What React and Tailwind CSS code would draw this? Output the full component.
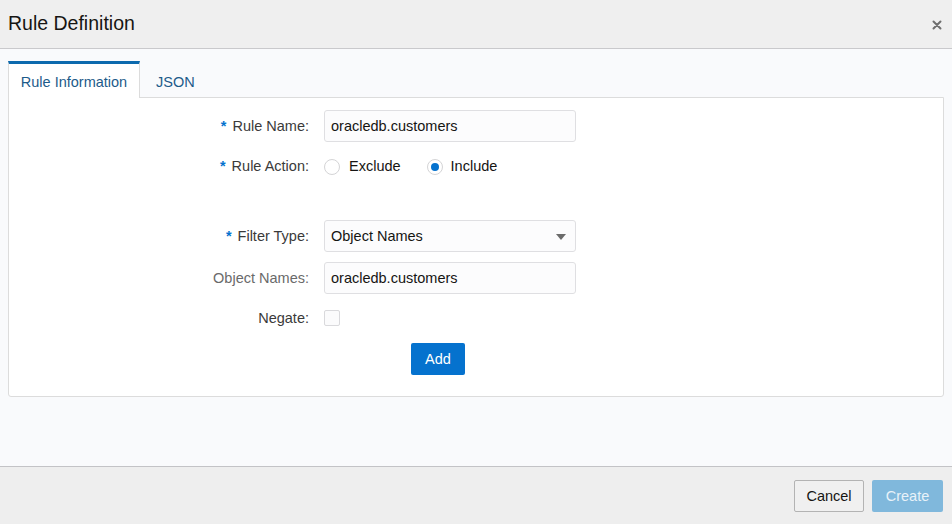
export default function App() {
  const font = { fontFamily: '"Liberation Sans", Arial, sans-serif' };

  return (
    <div className="w-[952px] h-[524px] flex flex-col bg-[#f9fafc] overflow-hidden" style={font}>
      {/* Header */}
      <div className="h-[49px] shrink-0 flex items-center justify-between pl-2 pr-[10px] bg-[#efefef] border-b border-[#c9c9cc]">
        <div className="text-[19.5px] text-[#161513] leading-none">Rule Definition</div>
        <svg width="10" height="10" viewBox="0 0 10 10" className="mt-[1px]">
          <path d="M1.5 1.5 L8.5 8.5 M8.5 1.5 L1.5 8.5" stroke="#6f6f6f" strokeWidth="2" strokeLinecap="round" />
        </svg>
      </div>

      {/* Body */}
      <div className="flex-1 px-2 pt-3">
        {/* Tabs */}
        <div className="flex h-[37px]">
          <div className="w-[132px] h-[37px] bg-white border-t-[3px] border-[#0d6aae] border-x border-x-[#dcdcdc] flex items-center justify-center pt-[3px] text-[14.5px] text-[#1d5b8a] relative z-10">
            Rule Information
          </div>
          <div className="px-4 flex items-center text-[14.5px] text-[#1d5b8a] pt-[6px]">JSON</div>
        </div>

        {/* Panel */}
        <div className="-mt-px bg-white border border-[#dcdcdc] rounded-b-[3px] pt-3 pb-[21px]">
          {/* Rule Name */}
          <div className="flex items-center h-8">
            <Label req>Rule Name:</Label>
            <TextBox>oracledb.customers</TextBox>
          </div>

          {/* Rule Action */}
          <div className="flex items-center h-8 mt-2">
            <Label req>Rule Action:</Label>
            <div className="flex items-center text-[14.5px] text-[#161513] pt-px">
              <span className="w-4 h-4 rounded-full border border-[#d4d4d6] bg-white" />
              <span className="ml-[9px]">Exclude</span>
              <span className="ml-[26px] w-4 h-4 rounded-full border border-[#d4d4d6] bg-white flex items-center justify-center">
                <span className="w-2 h-2 rounded-full bg-[#0572ce]" />
              </span>
              <span className="ml-2">Include</span>
            </div>
          </div>

          {/* Filter Type */}
          <div className="flex items-center h-8 mt-[38px]">
            <Label req>Filter Type:</Label>
            <div className="w-[252px] h-8 border border-[#dfdfe2] rounded-[3px] bg-[#fcfcfd] flex items-center justify-between pl-[6px] pr-[9px] pt-px text-[14.5px] text-[#161513]">
              <span>Object Names</span>
              <svg width="10" height="6" viewBox="0 0 10 6">
                <path d="M0 0 H10 L5 6 Z" fill="#6b6b6b" />
              </svg>
            </div>
          </div>

          {/* Object Names */}
          <div className="flex items-center h-8 mt-[10px]">
            <Label light>Object Names:</Label>
            <TextBox>oracledb.customers</TextBox>
          </div>

          {/* Negate */}
          <div className="flex items-center h-8 mt-2">
            <Label>Negate:</Label>
            <span className="w-4 h-4 rounded-[2px] border border-[#d9d9dc] bg-[#fbfbfc]" />
          </div>

          {/* Add */}
          <div className="flex mt-[9px]">
            <div className="w-[402px]" />
            <button className="w-[54px] h-8 bg-[#0572ce] text-white text-[14.5px] rounded-[2px] pt-px">Add</button>
          </div>
        </div>
      </div>

      {/* Footer */}
      <div className="h-[58px] shrink-0 bg-[#eeeeee] border-t border-[#c3c3c6] flex items-center justify-end gap-2 pr-[9px] pt-[1px]">
        <button className="w-[70px] h-8 bg-[#f0f0f0] border border-[#b3b3b3] rounded-[2px] text-[14.5px] text-[#161513] pt-px">Cancel</button>
        <button className="w-[71px] h-8 bg-[#80b8dc] rounded-[2px] text-[14.5px] text-[#e8f2f9] pt-px">Create</button>
      </div>
    </div>
  );
}

function TextBox({ children }) {
  return (
    <div className="w-[252px] h-8 border border-[#dfdfe2] rounded-[3px] bg-[#fcfcfd] flex items-center px-[6px] pt-px text-[14.5px] text-[#161513]">
      {children}
    </div>
  );
}

function Label({ children, req, light }) {
  return (
    <div className={`w-[315px] pr-[15px] pt-px text-right text-[14.5px] ${light ? "text-[#6a6a6a]" : "text-[#3a3a3a]"}`}>
      {req && <span className="text-[#0572ce] mr-[6px] font-bold">*</span>}
      {children}
    </div>
  );
}
